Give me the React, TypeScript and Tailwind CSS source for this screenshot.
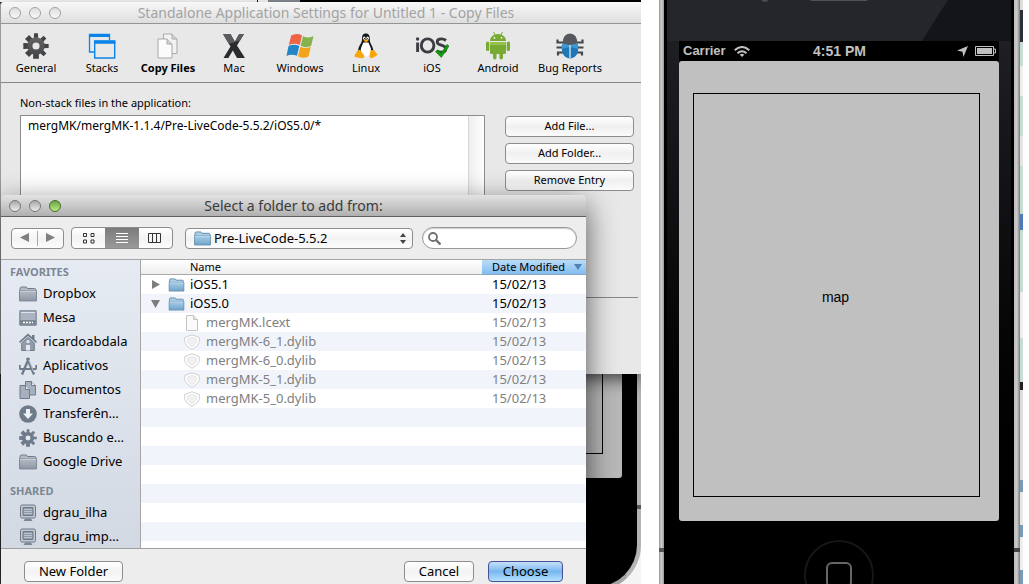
import React from "react";

const folderColors = {
  blue: ["#a9cfe8", "#6fa3c8", "#5b88a8"],
  gray: ["#b4bac4", "#8e96a4", "#707a8a"],
};

function Folder({ tone, className }: { tone: "blue" | "gray"; className: string }) {
  const [light, dark, edge] = folderColors[tone];
  return (
    <svg viewBox="0 0 18 16" className={className} aria-hidden="true">
      <defs>
        <linearGradient id={`folder-${tone}`} x1="0" y1="0" x2="0" y2="1">
          <stop offset="0" stopColor={light} />
          <stop offset="1" stopColor={dark} />
        </linearGradient>
      </defs>
      <path d="M1 14V2.5Q1 1 2.500 1h4.500q1 0 1.500 1.500h7Q17 2.500 17 4v10z" fill={light} stroke={edge} />
      <path d="M.5 5h17v10H.5z" fill={`url(#folder-${tone})`} stroke={edge} strokeOpacity=".7" />
      <path d="M1 5.500h16" stroke="#fff" strokeOpacity=".45" />
    </svg>
  );
}

function Gear({ className, top, bottom, hole, id }: { className: string; top: string; bottom: string; hole: string; id: string }) {
  return (
    <svg viewBox="0 0 24 24" className={className} aria-hidden="true">
      <defs>
        <linearGradient id={id} x1="0" y1="0" x2="0" y2="24" gradientUnits="userSpaceOnUse">
          <stop offset="0" stopColor={top} />
          <stop offset="1" stopColor={bottom} />
        </linearGradient>
      </defs>
      {[0, 45, 90, 135].map((a) => (
        <path key={a} d="M10.200 0.300h3.600l.9 23.400H9.300z" fill={bottom} transform={`rotate(${a} 12 12)`} />
      ))}
      <circle cx="12" cy="12" r="8" fill={`url(#${id})`} />
      <circle cx="12" cy="12" r="3.300" fill={hole} />
    </svg>
  );
}

function StacksIcon() {
  return (
    <svg viewBox="0 0 28 26" className="h-[26px] w-7" fill="none" stroke="#0a84e8" aria-hidden="true">
      <path d="M6 19H1.500V1.500h20V7" strokeWidth="1.300" />
      <path d="M1 2.500h21" strokeWidth="3" />
      <path d="M6.700 8h20v17h-20z" strokeWidth="1.400" />
      <path d="M6 9.200h21.400" strokeWidth="3" />
    </svg>
  );
}

function CopyIcon() {
  return (
    <svg viewBox="0 0 24 26" className="h-[26px] w-6" stroke="#a8a8a8" aria-hidden="true">
      <path d="M7.500 1H16l5 5v14.500H7.500z" fill="#f2f2f2" />
      <path d="M16 1v5h5" fill="#d4d4d4" />
      <path d="M2 6h9l5 5v14H2z" fill="#fbfbfb" />
      <path d="M11 6v5h5" fill="#d4d4d4" />
    </svg>
  );
}

function MacIcon() {
  return (
    <svg viewBox="0 0 24 26" className="h-[26px] w-6" aria-hidden="true">
      <path d="M1 1h7.500l4.300 7.800L17.200 1H22l-7 11.500L23 25h-8l-4.200-7.500L6.300 25H1.500L8.500 13.500z" fill="#2a2b2f" />
      <path d="M1 1h7.500l4.300 7.800L17.200 1H22l-4 6.500-9 2.800-2.500.2z" fill="#5a5b5e" />
    </svg>
  );
}

function WindowsIcon() {
  return (
    <svg viewBox="0 0 28 26" className="h-[26px] w-7" aria-hidden="true">
      <path d="M5.200 2.500Q10-.5 16 2.300L13.800 12Q8.500 9.500 2.800 12z" fill="#ee6445" />
      <path d="M17 3.200q5.500 2.600 10.500-.3L25.200 12.800q-5 2.800-10.500 0z" fill="#83b34a" />
      <path d="M2.500 13q5.500-2.500 10.800 0L11 22.800q-5.500-2.300-10.500.2z" fill="#2586c7" />
      <path d="M14.300 13.800q5.500 2.600 10.500 0l-2.300 9.700q-5 2.800-10.500-.2z" fill="#f2a51c" />
    </svg>
  );
}

function LinuxIcon() {
  return (
    <svg viewBox="0 0 24 26" className="h-[26px] w-6" aria-hidden="true">
      <path d="M12 .5c-3.300 0-4 2.300-3.900 5 .1 3-.9 4.300-2.500 7C4 15.200 3.500 19 5 21.500h13.500c2-2.500.5-6.500-1-9.500-1.400-2.800-1.800-4-1.700-6.500 0-3-1-5-3.800-5z" fill="#17181b" />
      <path d="M9.300 9.500c-.7 2.500-2.600 4.500-2.600 8 0 3 2 6 5.300 6s5.200-2.500 5.200-6c0-3.300-2.200-5.500-2.700-8z" fill="#fff" />
      <ellipse cx="10.300" cy="5.200" rx="1.200" ry="1.600" fill="#fff" />
      <ellipse cx="13.600" cy="5.200" rx="1.300" ry="1.600" fill="#fff" />
      <circle cx="10.600" cy="5.500" r=".6" /><circle cx="13.300" cy="5.500" r=".6" />
      <path d="M9.500 7.500 12 6.200l2.800 1.300-2.800 2z" fill="#f5a60a" />
      <path d="M3.500 17.500 6 16.800l4.500 6.200q-.6 2.700-3 2.200L1 24q-1-.7-.2-2.200z" fill="#f7a70c" />
      <path d="m16.500 17 3.500.2 3.500 4.300q-.5 1.500-4.500 3.300-2.800.8-3.500-1z" fill="#f7a70c" />
    </svg>
  );
}

function IosIcon() {
  return (
    <svg viewBox="0 0 34 26" className="h-[26px] w-[34px]" aria-hidden="true">
      <g fill="none" stroke="#3c3d42" strokeWidth="2.900">
        <path d="M2.600 9.500v9.500" />
        <ellipse cx="12.600" cy="12.500" rx="6.300" ry="6.600" />
        <path d="M31 7.500q-2-1.600-4.500-1.600c-3 0-4.300 1.300-4.300 3 0 4 8.600 2.500 8.600 6.800 0 2.300-2 3.600-4.800 3.600q-2.500 0-4.300-1.300" />
      </g>
      <circle cx="2.600" cy="6" r="1.700" fill="#3c3d42" />
      <path d="m20.500 18.500 2.500-1.600 3 3.600 6-9 2 1.500-7.700 11.500z" fill="#11a00c" stroke="#0b7a08" strokeWidth=".7" />
    </svg>
  );
}

function AndroidIcon() {
  return (
    <svg viewBox="0 0 26 28" className="h-7 w-[26px]" fill="#79ab34" aria-hidden="true">
      <path d="M5 9c0-4 3.500-7 8-7s8 3 8 7z" />
      <path d="m8.500 0 2 3.500M17.500 0l-2 3.500" stroke="#79ab34" />
      <circle cx="9.500" cy="5.800" r=".9" fill="#fff" />
      <circle cx="16.500" cy="5.800" r=".9" fill="#fff" />
      <path d="M5 10h16v10.500q0 1.500-1.500 1.500h-13Q5 22 5 20.500z" />
      <path d="M5 10h16v3H5z" fill="#94c24d" />
      <rect x="1" y="9.500" width="3.300" height="9.500" rx="1.600" />
      <rect x="21.700" y="9.500" width="3.300" height="9.500" rx="1.600" />
      <rect x="8" y="20" width="3.500" height="7.500" rx="1.700" />
      <rect x="14.500" y="20" width="3.500" height="7.500" rx="1.700" />
    </svg>
  );
}

function BugIcon() {
  return (
    <svg viewBox="0 0 28 26" className="h-[26px] w-7" aria-hidden="true">
      <path d="M1.500 6.500v3H7M26.500 6.500v3H21M.5 14.500H7M27.500 14.500H21M2 22.500v-3h5M26 22.500v-3h-5" fill="none" stroke="#43484d" strokeWidth="2.200" />
      <path d="M6 11.500q8-5 16 0 1.500 13-8 14Q4.500 24.500 6 11.500z" fill="#1f77b5" />
      <path d="M6 11.500q8-5 16 0 .4 2.500 0 4.500-8-3.500-16 0-.4-2 0-4.500z" fill="#3e97d2" />
      <path d="M14 10.500V25" stroke="#d7ecf8" strokeWidth="1.300" />
      <path d="M6.500 10.500Q7 .5 14 .5t7.500 10L14 12z" fill="#55595d" />
    </svg>
  );
}

function Lights({ active }: { active: boolean }) {
  const plain = active
    ? "size-3 rounded-full border border-[#777] bg-linear-to-b from-[#aaa] to-[#ececec]"
    : "size-3 rounded-full border border-[#a2a2a2] bg-linear-to-b from-[#dedede] to-[#f8f8f8]";
  const names = ["Close", "Minimize", "Zoom"];
  return (
    <div className="absolute top-[5px] left-2 flex gap-2">
      {names.map((n, i) => (
        <button
          key={n}
          aria-label={n}
          className={active && i === 2 ? "size-3 rounded-full border border-[#456b2b] bg-linear-to-b from-[#6ca343] to-[#b8ed82]" : plain}
        />
      ))}
    </div>
  );
}

const tools = [
  { label: "General", icon: <Gear className="size-[26px]" id="gear-main" top="#696969" bottom="#424346" hole="#e8e8e8" /> },
  { label: "Stacks", icon: <StacksIcon /> },
  { label: "Copy Files", icon: <CopyIcon />, current: true },
  { label: "Mac", icon: <MacIcon /> },
  { label: "Windows", icon: <WindowsIcon /> },
  { label: "Linux", icon: <LinuxIcon /> },
  { label: "iOS", icon: <IosIcon /> },
  { label: "Android", icon: <AndroidIcon /> },
  { label: "Bug Reports", icon: <BugIcon />, wide: true },
];

function SettingsWindow() {
  return (
    <section className="absolute inset-x-0 top-0.5 flex h-[372px] flex-col overflow-hidden rounded-tl-[4px] border-l border-[#999] bg-[#e8e8e8] shadow-[0_6px_16px_rgba(0,0,0,0.6)]">
      <header className="relative flex h-[22px] shrink-0 items-center justify-center border-b border-[#949494] bg-linear-to-b from-[#f8f8f8] to-[#dedede]">
        <Lights active={false} />
        <h1 className="pl-2.5 text-[14px] leading-5 text-[#a3a3a3]">Standalone Application Settings for Untitled 1 - Copy Files</h1>
      </header>
      <nav className="flex h-[59px] shrink-0 border-b border-[#888] pl-0.5">
        {tools.map((t) => (
          <button key={t.label} className={t.wide ? "flex w-[78px] shrink-0 flex-col items-center pt-2" : "flex w-[66px] shrink-0 flex-col items-center pt-2"}>
            <span className="flex h-7 items-center">{t.icon}</span>
            <span className={t.current ? "text-[11px] leading-4 font-bold whitespace-nowrap" : "text-[11px] leading-4 whitespace-nowrap"}>{t.label}</span>
          </button>
        ))}
      </nav>
      <div className="flex gap-5 pt-3 pr-[7px] pl-[19px]">
        <div className="flex grow flex-col gap-1">
          <label htmlFor="files" className="text-[11px] leading-4">Non-stack files in the application:</label>
          <div className="flex h-[160px] border border-[#8c8c8c] bg-white">
            <textarea id="files" className="grow resize-none px-[7px] py-0.5 text-[12px] leading-4 outline-none" defaultValue="mergMK/mergMK-1.1.4/Pre-LiveCode-5.5.2/iOS5.0/*" />
            <div className="w-4 border-l border-[#d8d8d8] bg-linear-to-r from-[#eee] to-white" />
          </div>
        </div>
        <div className="flex w-[129px] shrink-0 flex-col gap-1.5 pt-[21px]">
          {["Add File...", "Add Folder...", "Remove Entry"].map((b) => (
            <button key={b} className="h-[21px] rounded-[4px] border border-[#8d8d8d] bg-linear-to-b from-white via-[#f0f0f0] to-[#fbfbfb] pb-0.5 text-[11px] leading-4">{b}</button>
          ))}
        </div>
      </div>
      <hr className="mt-[22px] mr-[3px] ml-5 border-[#888]" />
    </section>
  );
}

const side = "h-[18px] w-[18px] shrink-0";

function DiskIcon() {
  return (
    <svg viewBox="0 0 18 18" className={side} aria-hidden="true">
      <path d="M.8 1.800h16.400v14.400H.8z" fill="#aab3bf" stroke="#6f7b8b" />
      <path d="M1 11h16v5H1z" fill="#7c8795" />
      <path d="M4 13.500h10" stroke="#fff" strokeWidth="1.500" strokeDasharray="2 1" />
      <path d="M2 3.500h14" stroke="#dde2e9" />
    </svg>
  );
}
function HouseIcon() {
  return (
    <svg viewBox="0 0 18 18" className={side} fill="#6f7b8b" aria-hidden="true">
      <path d="M9 .5 13 4V2h2.500v4.200L18 8.700l-1 1.200-8-7-8 7-1-1.200z" />
      <path d="m9 4.500 6.300 5.500v7.500H2.700V10z" fill="#929cab" stroke="#6f7b8b" />
      <path d="M7 12h4v5.500H7z" fill="#e6eaf0" />
      <circle cx="9" cy="8.500" r="1.600" fill="#e6eaf0" />
    </svg>
  );
}
function AppsIcon() {
  return (
    <svg viewBox="0 0 18 18" className={side} fill="none" stroke="#6f7b8b" aria-hidden="true">
      <path d="M10 1 3 17.500M8 1l7 16.500" strokeWidth="2.400" />
      <path d="M1 12h16M.8 8v4.500M17.200 8v4.500" strokeWidth="1.800" />
      <path d="m9.800 3 5 12" stroke="#d3d9e1" strokeWidth=".7" />
    </svg>
  );
}
function DocsIcon() {
  return (
    <svg viewBox="0 0 18 18" className={side} fill="#a7b0bd" stroke="#6f7b8b" aria-hidden="true">
      <path d="M6.500.5h6l4 4V14h-10z" />
      <path d="M12.500.5v4h4" fill="#e6eaf0" />
      <path d="M1 4.500h5.500l4 4v9H1z" />
      <path d="M6.500 4.500v4h4" fill="#e6eaf0" />
    </svg>
  );
}
function DownIcon() {
  return (
    <svg viewBox="0 0 18 18" className={side} aria-hidden="true">
      <circle cx="9" cy="9" r="8.800" fill="#6f7b8b" />
      <path d="M7 4h4v4.500h3L9 14 4 8.500h3z" fill="#eef1f5" />
    </svg>
  );
}
function HostIcon() {
  return (
    <svg viewBox="0 0 18 18" className={side} aria-hidden="true">
      <rect x="1.500" y="1" width="15" height="13" rx="1.500" fill="#c2c9d2" stroke="#6f7b8b" />
      <path d="M4 3.500h10v8H4z" fill="#8f9bab" stroke="#6f7b8b" />
      <path d="M5 5.500h8M5 7.500h8M5 9.500h8" stroke="#b9c2ce" />
      <path d="M6 14.500h6l1.500 2.500h-9z" fill="#7c8795" />
    </svg>
  );
}

const favorites = [
  { name: "Dropbox", icon: <Folder tone="gray" className={side} /> },
  { name: "Mesa", icon: <DiskIcon /> },
  { name: "ricardoabdala", icon: <HouseIcon /> },
  { name: "Aplicativos", icon: <AppsIcon /> },
  { name: "Documentos", icon: <DocsIcon /> },
  { name: "Transferên…", icon: <DownIcon /> },
  { name: "Buscando e…", icon: <Gear className={side} id="gear-side" top="#6f7b8b" bottom="#6f7b8b" hole="#e6eaf0" /> },
  { name: "Google Drive", icon: <Folder tone="gray" className={side} /> },
];
const shared = [
  { name: "dgrau_ilha", icon: <HostIcon /> },
  { name: "dgrau_imp…", icon: <HostIcon /> },
];

function Places({ title, items }: { title: string; items: { name: string; icon: React.ReactNode }[] }) {
  return (
    <div>
      <h3 className="mb-px pl-[9px] text-[11px] leading-[18px] font-bold text-[#7c8794]">{title}</h3>
      <ul>
        {items.map((p) => (
          <li key={p.name}>
            <a href="#" className="flex h-6 items-center gap-1.5 pl-[18px] text-[13px] whitespace-nowrap">
              {p.icon}
              {p.name}
            </a>
          </li>
        ))}
      </ul>
    </div>
  );
}

const files = [
  { name: "iOS5.1", kind: "closed" },
  { name: "iOS5.0", kind: "open" },
  { name: "mergMK.lcext", kind: "doc" },
  { name: "mergMK-6_1.dylib", kind: "lib" },
  { name: "mergMK-6_0.dylib", kind: "lib" },
  { name: "mergMK-5_1.dylib", kind: "lib" },
  { name: "mergMK-5_0.dylib", kind: "lib" },
];

function FileIcon({ kind }: { kind: string }) {
  if (kind === "doc")
    return (
      <svg viewBox="0 0 16 16" className="size-4" fill="#fafafa" stroke="#c4c4c4" aria-hidden="true">
        <path d="M2.500.5h7l4 4v11h-11z" />
        <path d="M9.500.5v4h4" fill="#e4e4e4" />
      </svg>
    );
  return (
    <svg viewBox="0 0 16 16" className="size-4" fill="#fff" stroke="#cfcfcf" aria-hidden="true">
      <path d="M8 .8 15.300 3.500v5Q13.500 13 8 15.300 2.500 13 .7 8.500v-5z" />
      <path d="M8 3.500 12.500 5v3.200q-1 2.800-4.500 4.300-3.500-1.500-4.500-4.300V5z" fill="#f1f1f1" stroke="#e6e6e6" />
    </svg>
  );
}

function FileTable() {
  const blank = Array.from({ length: 8 }, (_, i) => i);
  return (
    <table className="w-full table-fixed border-separate border-spacing-0 text-left text-[13px]">
      <colgroup>
        <col />
        <col className="w-[104px]" />
      </colgroup>
      <thead>
        <tr className="h-[15px] text-[11px] leading-[14px]">
          <th className="border-b border-[#aaa] bg-linear-to-b from-white to-[#eee] p-0 pl-[49px] font-normal">Name</th>
          <th className="border-b border-[#8aa9c6] bg-linear-to-b from-[#b9dcf8] to-[#82bdf0] p-0 pl-2.5 font-normal">
            <span className="flex items-center justify-between pr-1 whitespace-nowrap">
              Date Modified
              <svg viewBox="0 0 8 6" className="h-1.5 w-2" fill="#4f83b3" aria-hidden="true"><path d="M0 0h8L4 6z" /></svg>
            </span>
          </th>
        </tr>
      </thead>
      <tbody>
        {files.map((f) => {
          const dir = f.kind === "closed" || f.kind === "open";
          return (
            <tr key={f.name} className={dir ? "h-[19px] leading-[19px] even:bg-[#f1f5fb]" : "h-[19px] leading-[19px] text-[#808080] even:bg-[#f1f5fb]"}>
              <td className="p-0">
                <div className={dir ? "flex h-[19px] items-center pl-2.5" : "flex h-[19px] items-center gap-1.5 pl-[43px]"}>
                  {dir ? (
                    <>
                      <svg viewBox="0 0 10 10" className="size-2.5 shrink-0" fill="#7d7d7d" aria-hidden="true">
                        <path d={f.kind === "open" ? "M0 1h9L4.500 9z" : "M1 0l8 4.500L1 9z"} />
                      </svg>
                      <Folder tone="blue" className="mr-[5px] ml-[7px] h-[14px] w-[17px]" />
                    </>
                  ) : (
                    <FileIcon kind={f.kind} />
                  )}
                  {f.name}
                </div>
              </td>
              <td className="p-0 pl-2.5">15/02/13</td>
            </tr>
          );
        })}
        {blank.map((i) => (
          <tr key={i} className="h-[19px] even:bg-[#f1f5fb]">
            <td className="p-0" />
            <td className="p-0" />
          </tr>
        ))}
      </tbody>
    </table>
  );
}

const pill = "border border-[#8d8d8d] bg-linear-to-b from-white via-[#f3f3f3] to-[#fcfcfc]";

function OpenDialog() {
  return (
    <section className="absolute top-[195px] bottom-0 left-px flex w-[585px] flex-col rounded-t-[5px] bg-[#ededed] shadow-[0_10px_30px_rgba(0,0,0,0.65)]">
      <header className="relative flex h-[22px] shrink-0 items-center justify-center rounded-t-[5px] border-b border-[#5f5f5f] bg-linear-to-b from-[#e3e3e3] to-[#b0b0b0]">
        <Lights active />
        <h2 className="text-[14px] leading-5 text-[#3a3a3a]">Select a folder to add from:</h2>
      </header>
      <div className="flex h-[43px] shrink-0 items-center border-b border-[#a5a5a5] pr-[9px] pl-2.5">
        <div className={`${pill} flex h-[21px] w-[53px] rounded-[4px]`}>
          <button aria-label="Back" className="flex flex-1 items-center justify-center">
            <svg viewBox="0 0 9 10" className="h-2.5 w-[9px]" fill="#808080"><path d="M9 0v9L0 4.500z" /></svg>
          </button>
          <span className="my-0.5 w-px bg-[#aaa]" />
          <button aria-label="Forward" className="flex flex-1 items-center justify-center">
            <svg viewBox="0 0 9 10" className="h-2.5 w-[9px]" fill="#808080"><path d="M0 0v9l9-4.500z" /></svg>
          </button>
        </div>
        <div className={`${pill} ml-[7px] flex h-[22px] w-[102px] overflow-hidden rounded-[4px]`}>
          <button aria-label="Icon view" className="flex flex-1 items-center justify-center">
            <svg viewBox="0 0 12 11" className="h-[11px] w-3" fill="none" stroke="#333"><path d="M.5.500h3v3h-3zM8 .500h3v3H8zM.5 7h3v3h-3zM8 7h3v3H8z" /></svg>
          </button>
          <button aria-label="List view" className="flex flex-1 items-center justify-center bg-linear-to-b from-[#7c7c7c] to-[#999]">
            <svg viewBox="0 0 12 11" className="h-[11px] w-3" stroke="#fff"><path d="M0 .500h12M0 3.500h12M0 6.500h12M0 9.500h12" /></svg>
          </button>
          <button aria-label="Column view" className="flex flex-1 items-center justify-center">
            <svg viewBox="0 0 14 11" className="h-[11px] w-3.5" fill="none" stroke="#333"><path d="M.5.500h12v9H.5zM4.500.500v9M8.500.500v9" /></svg>
          </button>
        </div>
        <div className={`${pill} relative ml-3 h-[21px] w-[228px] rounded-[4px]`}>
          <Folder tone="blue" className="absolute top-0.5 left-2 h-[15px] w-[17px]" />
          <select aria-label="Folder" className="block size-full appearance-none pl-7 text-[13px] leading-[18px] outline-none">
            <option>Pre-LiveCode-5.5.2</option>
          </select>
          <svg viewBox="0 0 6 11" className="absolute top-1 right-1.5 h-[11px] w-1.5" fill="#444" aria-hidden="true"><path d="M3 0l3 4H0zM3 11l3-4H0z" /></svg>
        </div>
        <div className="ml-[9px] flex h-[22px] grow items-center rounded-full border border-[#999] bg-white pl-[5px] shadow-[inset_0_1px_1px_#ccc]">
          <svg viewBox="0 0 13 13" className="size-[13px] shrink-0" fill="none" stroke="#707070" aria-hidden="true">
            <circle cx="5" cy="5" r="4" strokeWidth="1.800" />
            <path d="m8 8 4.500 4.500" strokeWidth="2.400" />
          </svg>
          <input type="search" aria-label="Search" className="w-0 grow bg-transparent px-1 text-[13px] outline-none" />
        </div>
      </div>
      <div className="flex min-h-0 grow">
        <aside className="flex w-[140px] shrink-0 flex-col gap-2 overflow-hidden border-r border-[#a5a5a5] bg-linear-to-b from-[#e6ebf3] to-[#d3d9e3] pt-[3px]">
          <Places title="FAVORITES" items={favorites} />
          <Places title="SHARED" items={shared} />
        </aside>
        <div className="grow overflow-hidden bg-white">
          <FileTable />
        </div>
      </div>
      <footer className="flex h-9 shrink-0 items-start border-t border-[#a0a0a0] px-[23px] pt-3 text-[13px] leading-[17px]">
        <button className={`${pill} h-[21px] w-[99px] rounded-[4px] pb-px`}>New Folder</button>
        <button className={`${pill} ml-auto h-[21px] w-[70px] rounded-[4px] pb-px`}>Cancel</button>
        <button className="ml-3.5 h-[21px] w-[75px] rounded-[4px] border border-[#4b4f96] bg-linear-to-b from-[#c5e0f8] via-[#78b7ee] to-[#b5e2fd] pb-px">Choose</button>
      </footer>
    </section>
  );
}

function PhoneBehind() {
  return (
    <div className="flex h-full flex-col overflow-hidden bg-[#f4f4f4]">
      <div className="flex h-0.5 shrink-0 bg-black">
        <div className="w-[257px] bg-white" />
        <div className="ml-px w-2.5 bg-white" />
        <div className="w-8 bg-[#8a9098]" />
      </div>
      <div className="relative -mb-[7px] grow rounded-br-[46px] border-r-4 border-b-4 border-l-2 border-r-[#b4b4b4] border-b-[#a4a4a4] border-l-[#333] bg-black pr-[15px] pb-[109px]">
        <div className="h-full rounded-br-[3px] bg-[#b8b8b8] pr-[19px] pb-6">
          <div className="h-full border-r border-b border-black" />
        </div>
        <div className="absolute -right-1 bottom-[78px] h-1 w-1 bg-[#555]" />
      </div>
    </div>
  );
}

function StatusBar() {
  return (
    <div className="grid h-5 shrink-0 grid-cols-3 items-center bg-black pr-[3px] pl-1 font-['Liberation_Sans',sans-serif] text-[#c0c0c0]">
      <div className="flex items-center gap-2 text-[13px] leading-5 font-bold">
        Carrier
        <svg viewBox="0 0 16 11" className="h-[11px] w-4" fill="none" stroke="#c0c0c0" strokeWidth="2" aria-hidden="true">
          <path d="M.7 4.200Q8-2.200 15.300 4.200M3.500 7.200q4.500-3.800 9 0" />
          <path d="M5.700 8.700q2.300-1.700 4.600 0L8 11z" fill="#c0c0c0" stroke="none" />
        </svg>
      </div>
      <div className="text-center text-[14px] leading-5 font-bold">4:51 PM</div>
      <div className="flex items-center justify-end gap-[7px]">
        <svg viewBox="0 0 12 12" className="size-[11px]" fill="#c0c0c0" aria-hidden="true"><path d="M12 0 7 12 6 6.200 0 5z" /></svg>
        <svg viewBox="0 0 21 10" className="h-2.5 w-[21px]" fill="none" stroke="#c0c0c0" aria-hidden="true">
          <path d="M.5.500h18v9H.5zM18.500 3h2v4h-2" />
          <path d="M2 2h15v6H2z" fill="#c0c0c0" stroke="none" />
        </svg>
      </div>
    </div>
  );
}

function Simulator() {
  return (
    <main className="flex h-full overflow-hidden">
      <div className="flex w-[5px] shrink-0 flex-col bg-linear-to-r from-[#999] via-[#ccc] to-[#999]">
        <div className="mt-auto mb-8 h-1 bg-[#555]" />
      </div>
      <div className="flex grow flex-col border-x-3 border-black bg-linear-to-b from-[#212327] via-[#0b0c0e] via-45% to-black">
        <svg viewBox="0 0 344 41" preserveAspectRatio="none" className="h-[41px] w-full shrink-0" aria-hidden="true">
          <path d="M0 0h281l-26 41H0z" fill="#24262a" />
          <path d="M281 0h63v41h-89z" fill="#141518" />
          <rect x="143" y="-4" width="58" height="5" rx="2" fill="#505256" />
          <circle cx="98" cy="-2" r="4" fill="#484a4e" />
        </svg>
        <div className="flex grow flex-col px-3">
          <StatusBar />
          <div className="flex grow bg-black">
            <div className="flex grow rounded-[3px] bg-[#c0c0c0] pt-8 pr-[19px] pb-6 pl-[14px]">
              <div className="flex grow items-center justify-center border border-black font-['Liberation_Sans',sans-serif] text-[14px]">
                <span className="pt-1 pr-0.5">map</span>
              </div>
            </div>
          </div>
        </div>
        <div className="flex h-[63px] shrink-0 justify-center overflow-hidden pt-[19px]">
          <button aria-label="Home" className="flex size-[70px] shrink-0 items-start justify-center rounded-full border-2 border-[#15161a] bg-black pt-5">
            <span className="block size-[26px] rounded-[6px] border-2 border-[#666]" />
          </button>
        </div>
      </div>
      <div className="flex w-1.5 shrink-0 flex-col bg-linear-to-r from-[#bbb] via-[#ccc] to-[#777]">
        <div className="mt-auto mb-8 h-1 bg-[#444]" />
      </div>
      <div className="flex w-[3px] shrink-0 flex-col">
        <div className="h-2.5 bg-[#ddd]" />
        <div className="h-8 bg-[#2b3038]" />
        <div className="h-6 bg-[#c6ddd4]" />
        <div className="h-[30px] bg-[#eee]" />
        <div className="h-10 bg-[#c6ddd4]" />
        <div className="h-[30px] bg-[#e4e4e4]" />
        <div className="h-12 bg-[#c6ddd4]" />
        <div className="h-4 bg-[#4a7db8]" />
        <div className="h-[62px] bg-[#c6ddd4]" />
        <div className="h-[46px] bg-[#eee]" />
        <div className="h-[44px] bg-[#c6ddd4]" />
        <div className="h-2 bg-[#222]" />
        <div className="h-[90px] bg-[#ddd]" />
        <div className="h-3 bg-[#789bb5]" />
        <div className="h-[33px] bg-[#e8e8e8]" />
        <div className="h-3 bg-[#789bb5]" />
        <div className="h-[33px] bg-[#eee]" />
        <div className="grow bg-[#789bb5]" />
      </div>
    </main>
  );
}

export default function App() {
  return (
    <div className="grid h-screen grid-cols-[641fr_364fr] gap-[18px] overflow-hidden bg-white pr-1.5 font-['Noto_Sans',sans-serif] text-black">
      <div className="relative overflow-hidden">
        <PhoneBehind />
        <SettingsWindow />
        <OpenDialog />
      </div>
      <Simulator />
    </div>
  );
}
